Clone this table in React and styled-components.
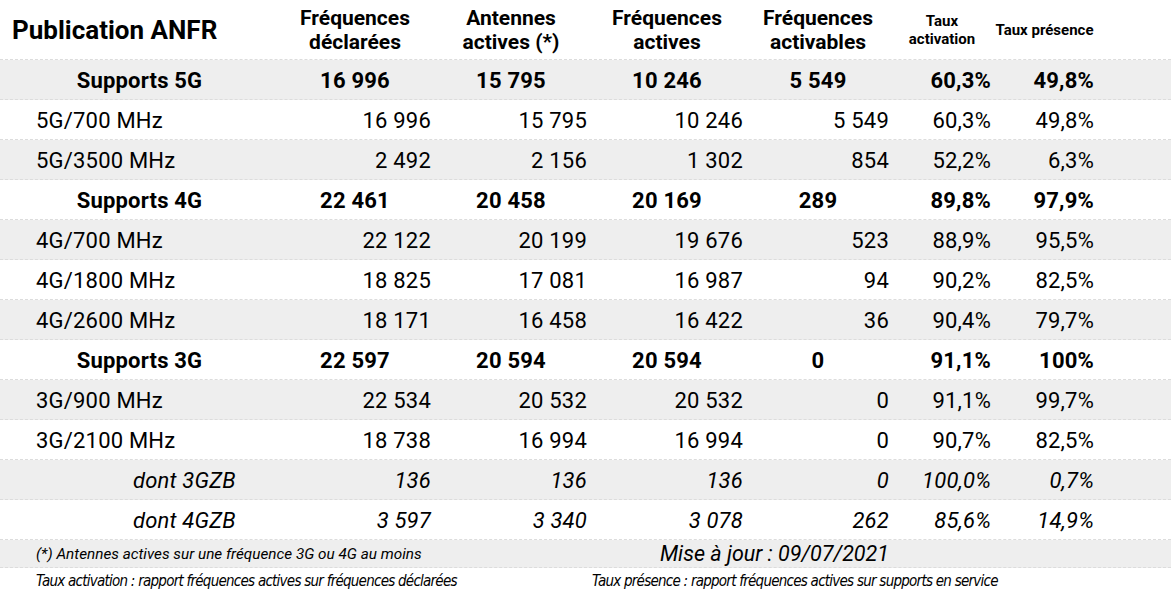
import React from 'react';
import styled, { createGlobalStyle } from 'styled-components';

const GlobalStyle = createGlobalStyle`
  body {
    margin: 0;
    background: #fff;
    font-family: Roboto, "Liberation Sans", sans-serif;
    color: #000;
  }
`;

const COLS = '279px 156px 156px 156px 146px 102px 103px 1fr';

const rows = [
  { kind: 'group', label: 'Supports 5G', values: ['16 996', '15 795', '10 246', '5 549', '60,3%', '49,8%'] },
  { kind: 'band', label: '5G/700 MHz', values: ['16 996', '15 795', '10 246', '5 549', '60,3%', '49,8%'] },
  { kind: 'band', label: '5G/3500 MHz', values: ['2 492', '2 156', '1 302', '854', '52,2%', '6,3%'] },
  { kind: 'group', label: 'Supports 4G', values: ['22 461', '20 458', '20 169', '289', '89,8%', '97,9%'] },
  { kind: 'band', label: '4G/700 MHz', values: ['22 122', '20 199', '19 676', '523', '88,9%', '95,5%'] },
  { kind: 'band', label: '4G/1800 MHz', values: ['18 825', '17 081', '16 987', '94', '90,2%', '82,5%'] },
  { kind: 'band', label: '4G/2600 MHz', values: ['18 171', '16 458', '16 422', '36', '90,4%', '79,7%'] },
  { kind: 'group', label: 'Supports 3G', values: ['22 597', '20 594', '20 594', '0', '91,1%', '100%'] },
  { kind: 'band', label: '3G/900 MHz', values: ['22 534', '20 532', '20 532', '0', '91,1%', '99,7%'] },
  { kind: 'band', label: '3G/2100 MHz', values: ['18 738', '16 994', '16 994', '0', '90,7%', '82,5%'] },
  { kind: 'sub', label: 'dont 3GZB', values: ['136', '136', '136', '0', '100,0%', '0,7%'] },
  { kind: 'sub', label: 'dont 4GZB', values: ['3 597', '3 340', '3 078', '262', '85,6%', '14,9%'] },
];

export default function App() {
  return (
    <Page>
      <GlobalStyle />
      <HeadRow>
        <Title>Publication ANFR</Title>
        <HeadCell>Fréquences<br />déclarées</HeadCell>
        <HeadCell>Antennes<br />actives (*)</HeadCell>
        <HeadCell>Fréquences<br />actives</HeadCell>
        <HeadCell>Fréquences<br />activables</HeadCell>
        <HeadCell small>Taux<br />activation</HeadCell>
        <HeadCell small>Taux présence</HeadCell>
        <span />
      </HeadRow>
      {rows.map((row, i) => (
        <Row key={row.label} shaded={i % 2 === 0}>
          <Label kind={row.kind}>{row.label}</Label>
          {row.values.map((v, j) => (
            <Value key={j} kind={row.kind} pct={j >= 4}>{v}</Value>
          ))}
          <span />
        </Row>
      ))}
      <NoteRow>
        <Note>(*) Antennes actives sur une fréquence 3G ou 4G au moins</Note>
        <Update>Mise à jour : 09/07/2021</Update>
        <span />
      </NoteRow>
      <Legend>
        <LegendText>Taux activation : rapport fréquences actives sur fréquences déclarées</LegendText>
        <LegendText>Taux présence : rapport fréquences actives sur supports en service</LegendText>
      </Legend>
    </Page>
  );
}

const Page = styled.div`
  width: 1171px;
  height: 594px;
  overflow: hidden;
`;

const HeadRow = styled.div`
  display: grid;
  grid-template-columns: ${COLS};
  height: 60px;
  align-items: center;
  border-bottom: 1px dashed #dcdcdc;
  box-sizing: border-box;
`;

const Title = styled.div`
  padding-left: 12px;
  font-size: 26px;
  font-weight: 700;
`;

const HeadCell = styled.div`
  text-align: center;
  font-weight: 700;
  font-size: ${p => (p.small ? '15px' : '21px')};
  line-height: ${p => (p.small ? '18px' : '24px')};
  padding-right: 4px;
  white-space: nowrap;
`;

const Row = styled.div`
  display: grid;
  grid-template-columns: ${COLS};
  height: 40px;
  padding-top: 2px;
  align-items: center;
  background: ${p => (p.shaded ? '#eeeeee' : '#ffffff')};
  border-bottom: 1px dashed #dcdcdc;
  box-sizing: border-box;
  font-size: 22px;
  letter-spacing: 0.2px;
  white-space: nowrap;
`;

const Label = styled.div`
  font-weight: ${p => (p.kind === 'group' ? 700 : 400)};
  font-style: ${p => (p.kind === 'sub' ? 'italic' : 'normal')};
  text-align: ${p => (p.kind === 'group' ? 'center' : 'left')};
  padding-left: ${p => (p.kind === 'sub' ? '133px' : p.kind === 'band' ? '36px' : '0')};
`;

const Value = styled.div`
  font-weight: ${p => (p.kind === 'group' ? 700 : 400)};
  font-style: ${p => (p.kind === 'sub' ? 'italic' : 'normal')};
  text-align: ${p => (p.kind === 'group' && !p.pct ? 'center' : 'right')};
  padding-right: 4px;
`;

const NoteRow = styled.div`
  display: grid;
  grid-template-columns: 591px 302px 1fr;
  height: 28px;
  align-items: center;
  background: #eeeeee;
  border-bottom: 1px dashed #dcdcdc;
  box-sizing: border-box;
  font-style: italic;
  white-space: nowrap;
`;

const Note = styled.div`
  padding-left: 36px;
  font-size: 15.3px;
`;

const Update = styled.div`
  text-align: right;
  padding-right: 4px;
  font-size: 21.5px;
`;

const Legend = styled.div`
  display: grid;
  grid-template-columns: 556px 1fr;
  height: 26px;
  align-items: center;
  padding-left: 36px;
`;

const LegendText = styled.div`
  font-family: "DejaVu Sans Condensed", "DejaVu Sans", sans-serif;
  font-stretch: condensed;
  font-style: italic;
  font-size: 15px;
  letter-spacing: -0.75px;
  white-space: nowrap;
`;
